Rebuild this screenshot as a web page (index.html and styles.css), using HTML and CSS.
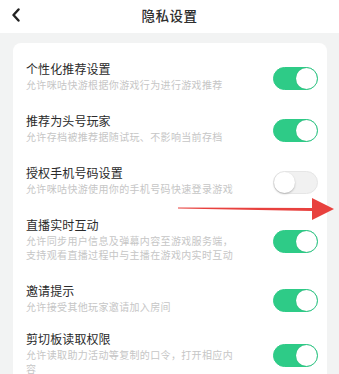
FILE: index.html
```html
<!DOCTYPE html>
<html lang="zh">
<head>
<meta charset="utf-8">
<link rel="stylesheet" href="styles.css">
</head>
<body>
<div class="page">
  <header class="header">
    <svg class="back" width="10" height="14" viewBox="0 0 10 14"><path d="M7.5 1.5 L2.5 7 L7.5 12.5" fill="none" stroke="#222" stroke-width="2.4" stroke-linecap="round" stroke-linejoin="round"/></svg>
    <div class="title">隐私设置</div>
  </header>
  <main class="content">
    <section class="card">
      <div class="row">
        <div class="text">
          <div class="name">个性化推荐设置</div>
          <div class="desc">允许咪咕快游根据你游戏行为进行游戏推荐</div>
        </div>
        <span class="toggle on"><span class="knob"></span></span>
      </div>
      <div class="row">
        <div class="text">
          <div class="name">推荐为头号玩家</div>
          <div class="desc">允许存档被推荐据随试玩、不影响当前存档</div>
        </div>
        <span class="toggle on"><span class="knob"></span></span>
      </div>
      <div class="row">
        <div class="text">
          <div class="name">授权手机号码设置</div>
          <div class="desc">允许咪咕快游使用你的手机号码快速登录游戏</div>
        </div>
        <span class="toggle"><span class="knob"></span></span>
      </div>
      <div class="row">
        <div class="text">
          <div class="name">直播实时互动</div>
          <div class="desc">允许同步用户信息及弹幕内容至游戏服务端，<br>支持观看直播过程中与主播在游戏内实时互动</div>
        </div>
        <span class="toggle on"><span class="knob"></span></span>
      </div>
      <div class="row short">
        <div class="text">
          <div class="name">邀请提示</div>
          <div class="desc">允许接受其他玩家邀请加入房间</div>
        </div>
        <span class="toggle on"><span class="knob"></span></span>
      </div>
      <div class="row">
        <div class="text">
          <div class="name">剪切板读取权限</div>
          <div class="desc">允许读取助力活动等复制的口令，打开相应内<br>容</div>
        </div>
        <span class="toggle on"><span class="knob"></span></span>
      </div>
    </section>
  </main>
  <svg class="arrow" width="160" height="24" viewBox="0 0 160 24"><path d="M0 9.5 L134 10 L134 0 L156 11 L134 22 L134 13 L0 10.5 Z" fill="#e8413e"/></svg>
</div>
</body>
</html>
```
FILE: styles.css
```css
* { box-sizing: border-box; }
html, body { margin: 0; padding: 0; }
body {
  width: 339px;
  height: 374px;
  overflow: hidden;
  background: #f2f3f3;
  font-family: "Noto Sans CJK SC", "Noto Sans", sans-serif;
}
.page { position: relative; width: 339px; height: 374px; }
.header {
  height: 33px;
  background: #fff;
  display: flex;
  align-items: center;
  justify-content: center;
  position: relative;
}
.back { position: absolute; left: 11px; top: 8px; }
.title {
  font-size: 13.5px;
  font-weight: 500;
  color: #2e2e2e;
  letter-spacing: 0.5px;
  margin-top: -3px;
}
.content { padding: 10px 12px 0 13px; }
.card {
  background: #fff;
  border-radius: 8px;
  padding: 7px 9px 0 13px;
  height: 400px;
}
.row {
  display: flex;
  align-items: center;
  justify-content: space-between;
  padding: 10px 0;
}
.row.short { padding-bottom: 6px; }
.name {
  font-size: 12px;
  line-height: 18px;
  color: #2a2a2a;
  letter-spacing: 0.1px;
}
.desc {
  font-size: 10px;
  line-height: 14px;
  color: #c6c6c6;
  letter-spacing: 0.35px;
  white-space: nowrap;
}
.toggle {
  flex: none;
  width: 45px;
  height: 23px;
  border-radius: 12px;
  background: #f1f1f1;
  border: 1px solid #e6e6e6;
  position: relative;
  margin-top: 4px;
}
.toggle .knob {
  position: absolute;
  left: 0;
  top: 0;
  width: 21px;
  height: 21px;
  border-radius: 50%;
  background: #fff;
  box-shadow: 0 1px 2px rgba(0,0,0,0.25);
}
.toggle.on { background: #2ecb87; border-color: #2ecb87; }
.toggle.on .knob { left: 22px; box-shadow: 0 0 1px rgba(0,0,0,0.2); }
.arrow { position: absolute; left: 178px; top: 198px; }
```
